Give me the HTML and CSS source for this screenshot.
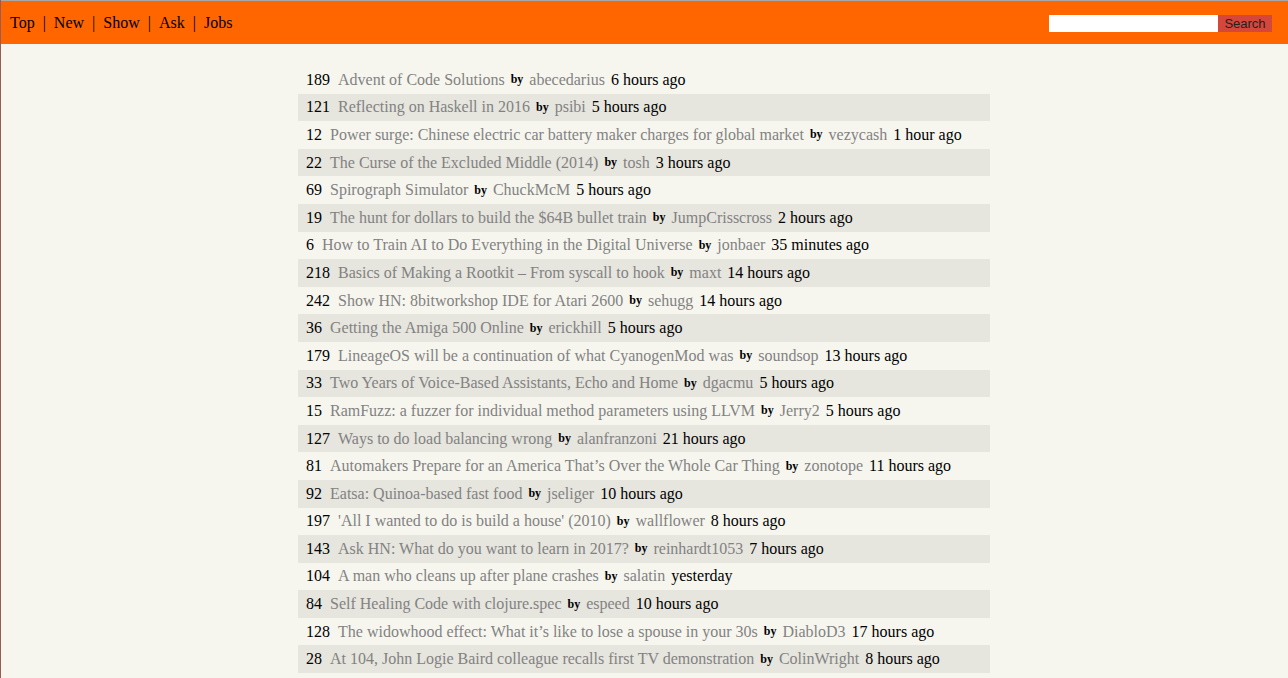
FILE: index.html
```html
<!DOCTYPE html>
<html>
<head>
<meta charset="utf-8">
<link rel="stylesheet" href="styles.css">
</head>
<body>
<div class="frame">
  <header class="topbar">
    <nav class="nav">
      <a href="#">Top</a><span class="sep">|</span><a href="#">New</a><span class="sep">|</span><a href="#">Show</a><span class="sep">|</span><a href="#">Ask</a><span class="sep">|</span><a href="#">Jobs</a>
    </nav>
    <form class="search">
      <input class="search-input" type="text">
      <button class="search-btn" type="button">Search</button>
    </form>
  </header>
  <main class="list">
    <div class="row"><span class="score">189</span><span class="title">Advent of Code Solutions</span><span class="by">by</span><span class="author">abecedarius</span><span class="time">6 hours ago</span></div>
    <div class="row"><span class="score">121</span><span class="title">Reflecting on Haskell in 2016</span><span class="by">by</span><span class="author">psibi</span><span class="time">5 hours ago</span></div>
    <div class="row"><span class="score">12</span><span class="title">Power surge: Chinese electric car battery maker charges for global market</span><span class="by">by</span><span class="author">vezycash</span><span class="time">1 hour ago</span></div>
    <div class="row"><span class="score">22</span><span class="title">The Curse of the Excluded Middle (2014)</span><span class="by">by</span><span class="author">tosh</span><span class="time">3 hours ago</span></div>
    <div class="row"><span class="score">69</span><span class="title">Spirograph Simulator</span><span class="by">by</span><span class="author">ChuckMcM</span><span class="time">5 hours ago</span></div>
    <div class="row"><span class="score">19</span><span class="title">The hunt for dollars to build the $64B bullet train</span><span class="by">by</span><span class="author">JumpCrisscross</span><span class="time">2 hours ago</span></div>
    <div class="row"><span class="score">6</span><span class="title">How to Train AI to Do Everything in the Digital Universe</span><span class="by">by</span><span class="author">jonbaer</span><span class="time">35 minutes ago</span></div>
    <div class="row"><span class="score">218</span><span class="title">Basics of Making a Rootkit – From syscall to hook</span><span class="by">by</span><span class="author">maxt</span><span class="time">14 hours ago</span></div>
    <div class="row"><span class="score">242</span><span class="title">Show HN: 8bitworkshop IDE for Atari 2600</span><span class="by">by</span><span class="author">sehugg</span><span class="time">14 hours ago</span></div>
    <div class="row"><span class="score">36</span><span class="title">Getting the Amiga 500 Online</span><span class="by">by</span><span class="author">erickhill</span><span class="time">5 hours ago</span></div>
    <div class="row"><span class="score">179</span><span class="title">LineageOS will be a continuation of what CyanogenMod was</span><span class="by">by</span><span class="author">soundsop</span><span class="time">13 hours ago</span></div>
    <div class="row"><span class="score">33</span><span class="title">Two Years of Voice-Based Assistants, Echo and Home</span><span class="by">by</span><span class="author">dgacmu</span><span class="time">5 hours ago</span></div>
    <div class="row"><span class="score">15</span><span class="title">RamFuzz: a fuzzer for individual method parameters using LLVM</span><span class="by">by</span><span class="author">Jerry2</span><span class="time">5 hours ago</span></div>
    <div class="row"><span class="score">127</span><span class="title">Ways to do load balancing wrong</span><span class="by">by</span><span class="author">alanfranzoni</span><span class="time">21 hours ago</span></div>
    <div class="row"><span class="score">81</span><span class="title">Automakers Prepare for an America That’s Over the Whole Car Thing</span><span class="by">by</span><span class="author">zonotope</span><span class="time">11 hours ago</span></div>
    <div class="row"><span class="score">92</span><span class="title">Eatsa: Quinoa-based fast food</span><span class="by">by</span><span class="author">jseliger</span><span class="time">10 hours ago</span></div>
    <div class="row"><span class="score">197</span><span class="title">'All I wanted to do is build a house' (2010)</span><span class="by">by</span><span class="author">wallflower</span><span class="time">8 hours ago</span></div>
    <div class="row"><span class="score">143</span><span class="title">Ask HN: What do you want to learn in 2017?</span><span class="by">by</span><span class="author">reinhardt1053</span><span class="time">7 hours ago</span></div>
    <div class="row"><span class="score">104</span><span class="title">A man who cleans up after plane crashes</span><span class="by">by</span><span class="author">salatin</span><span class="time">yesterday</span></div>
    <div class="row"><span class="score">84</span><span class="title">Self Healing Code with clojure.spec</span><span class="by">by</span><span class="author">espeed</span><span class="time">10 hours ago</span></div>
    <div class="row"><span class="score">128</span><span class="title">The widowhood effect: What it’s like to lose a spouse in your 30s</span><span class="by">by</span><span class="author">DiabloD3</span><span class="time">17 hours ago</span></div>
    <div class="row"><span class="score">28</span><span class="title">At 104, John Logie Baird colleague recalls first TV demonstration</span><span class="by">by</span><span class="author">ColinWright</span><span class="time">8 hours ago</span></div>
  </main>
</div>
</body>
</html>
```

FILE: styles.css
```css
html, body {
  margin: 0;
  padding: 0;
  background: #f6f6ef;
  overflow: hidden;
}
body {
  font-family: "Liberation Serif", "Times New Roman", serif;
  font-size: 16px;
  color: #000;
}
.frame {
  position: relative;
  min-height: 678px;
  border-top: 1px solid #a8a8a8;
  box-sizing: border-box;
}
.frame::before {
  content: "";
  position: absolute;
  left: 0;
  top: -1px;
  bottom: 0;
  width: 1px;
  background: #9a5a55;
  z-index: 2;
}
.topbar {
  height: 43px;
  background: #ff6600;
  display: flex;
  align-items: center;
  justify-content: space-between;
  padding: 0 16px 0 10px;
}
.nav {
  display: flex;
  align-items: center;
}
.nav a {
  color: #000;
  text-decoration: none;
}
.sep {
  margin: 0 8px;
}
.search {
  display: flex;
  margin: 2px 0 0;
}
.search-input {
  width: 169px;
  height: 17px;
  border: none;
  padding: 0;
  margin: 0;
  background: #fff;
  outline: none;
}
.search-btn {
  width: 54px;
  height: 17px;
  border: none;
  padding: 0;
  margin: 0;
  background: #d5473a;
  color: #222;
  font-family: "Liberation Sans", Arial, sans-serif;
  font-size: 13px;
  line-height: 17px;
}
.list {
  width: 692px;
  margin: 22px auto 0;
}
.row {
  height: 27.6px;
  display: flex;
  align-items: center;
  padding-left: 8px;
  white-space: nowrap;
}
.row:nth-child(even) {
  background: #e6e5de;
}
.score {
  margin-right: 8px;
}
.title {
  color: #828282;
  margin-right: 6px;
}
.by {
  font-size: 12px;
  font-weight: bold;
  margin-right: 6px;
}
.author {
  color: #828282;
  margin-right: 6px;
}
.time {
  color: #000;
}
```
